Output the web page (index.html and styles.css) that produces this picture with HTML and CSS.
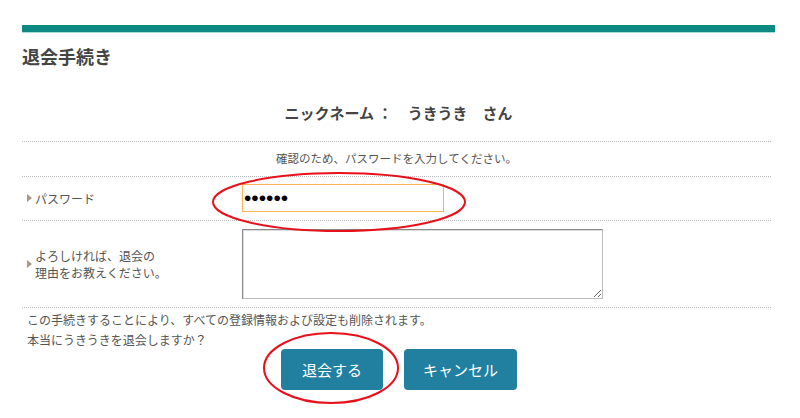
FILE: index.html
```html
<!DOCTYPE html>
<html lang="ja">
<head>
    <meta charset="UTF-8">
    <meta name="viewport" content="width=device-width, initial-scale=1.0">
    <title>退会手続き</title>
    <link rel="stylesheet" href="styles.css">
</head>
<body>
    <div class="page">
        <div class="bar"></div>
        <h1>退会手続き</h1>

        <form class="withdraw">
            <div class="nick">ニックネーム ： <span class="nick-name">うきうき　さん</span></div>
            <div class="info">確認のため、パスワードを入力してください。</div>

            <div class="row">
                <label class="label" for="pw">パスワード</label>
                <div class="field">
                    <input type="password" id="pw" class="pw" value="123456">
                </div>
            </div>

            <div class="row row-reason">
                <label class="label" for="reason">よろしければ、退会の<br>理由をお教えください。</label>
                <div class="field">
                    <textarea id="reason" class="reason"></textarea>
                </div>
            </div>

            <p class="notice">この手続きすることにより、すべての登録情報および設定も削除されます。<br>本当にうきうきを退会しますか？</p>

            <div class="buttons">
                <button type="button" class="btn btn-quit">退会する</button>
                <button type="button" class="btn btn-cancel">キャンセル</button>
            </div>
        </form>

        <!-- red marks drawn over the form -->
        <svg class="marks" width="800" height="418" viewBox="0 0 800 418">
            <ellipse cx="339" cy="202" rx="126" ry="29" />
            <ellipse cx="331" cy="368" rx="67" ry="35" />
        </svg>
    </div>
</body>
</html>
```

FILE: styles.css
```css
body {
    margin: 0;
    background: #fff;
    font-family: "Noto Sans CJK JP", "Liberation Sans", sans-serif;
    color: #555;
}
.page {
    position: relative;
    padding: 25px 25px 0 22px;
    height: 393px;
    overflow: hidden;
}
.bar {
    height: 8px;
    width: 753px;
    background-color: #0e8a84;
    border-bottom: 1px solid #a8dcd8;
    box-sizing: border-box;
}
h1 {
    margin: 11px 0 0;
    font-size: 18px;
    line-height: 24px;
    font-weight: bold;
    color: #444;
}
.withdraw {
    width: 749px;
}
.nick {
    padding: 35px 0 18px 4px;
    line-height: 20px;
    font-size: 15px;
    font-weight: bold;
    color: #444;
    text-align: center;
    border-bottom: 1px dotted #bbb;
}
.nick-name {
    margin-left: 12px;
}
.info {
    padding: 6px 0 8px;
    line-height: 20px;
    font-size: 11.5px;
    text-align: center;
    border-bottom: 1px dotted #bbb;
}
.row {
    display: flex;
    align-items: center;
    padding: 7px 0 8px;
    border-bottom: 1px dotted #bbb;
}
.row-reason {
    padding: 8px 0 8px;
}
.label {
    position: relative;
    width: 220px;
    padding-left: 13px;
    box-sizing: border-box;
    font-size: 12px;
    line-height: 17px;
    color: #555;
}
.label::before {
    content: "";
    position: absolute;
    left: 5px;
    top: 50%;
    margin-top: -4px;
    border-left: 5px solid #a89888;
    border-top: 4px solid transparent;
    border-bottom: 4px solid transparent;
}
.field {
    flex: 1;
}
.pw {
    display: block;
    width: 202px;
    height: 28px;
    box-sizing: border-box;
    margin: 0;
    padding: 0 1px;
    border: 1px solid #f7b459;
    font-family: "Liberation Sans", sans-serif;
    font-size: 21px;
    color: #000;
    outline: none;
}
.reason {
    display: block;
    width: 361px;
    height: 70px;
    box-sizing: border-box;
    margin: 0;
    border: 1px solid #888;
    border-right-color: #bbb;
    border-bottom-color: #bbb;
    box-shadow: inset 1px 1px 0 #ddd;
    resize: both;
}
.notice {
    margin: 0;
    padding: 2px 0 0 5px;
    font-size: 12px;
    line-height: 20px;
    color: #555;
}
.buttons {
    display: flex;
    justify-content: center;
    gap: 21px;
    padding-left: 5px;
    margin-top: -1px;
}
.btn {
    height: 41px;
    border: none;
    border-radius: 4px;
    background: #21809f;
    color: #fff;
    font-family: "Noto Sans CJK JP", sans-serif;
    font-size: 15px;
    cursor: pointer;
}
.btn-quit {
    width: 102px;
}
.btn-cancel {
    width: 113px;
}
.marks {
    position: absolute;
    left: 0;
    top: 0;
    pointer-events: none;
}
.marks ellipse {
    fill: none;
    stroke: #e8101a;
    stroke-width: 2;
}
```
